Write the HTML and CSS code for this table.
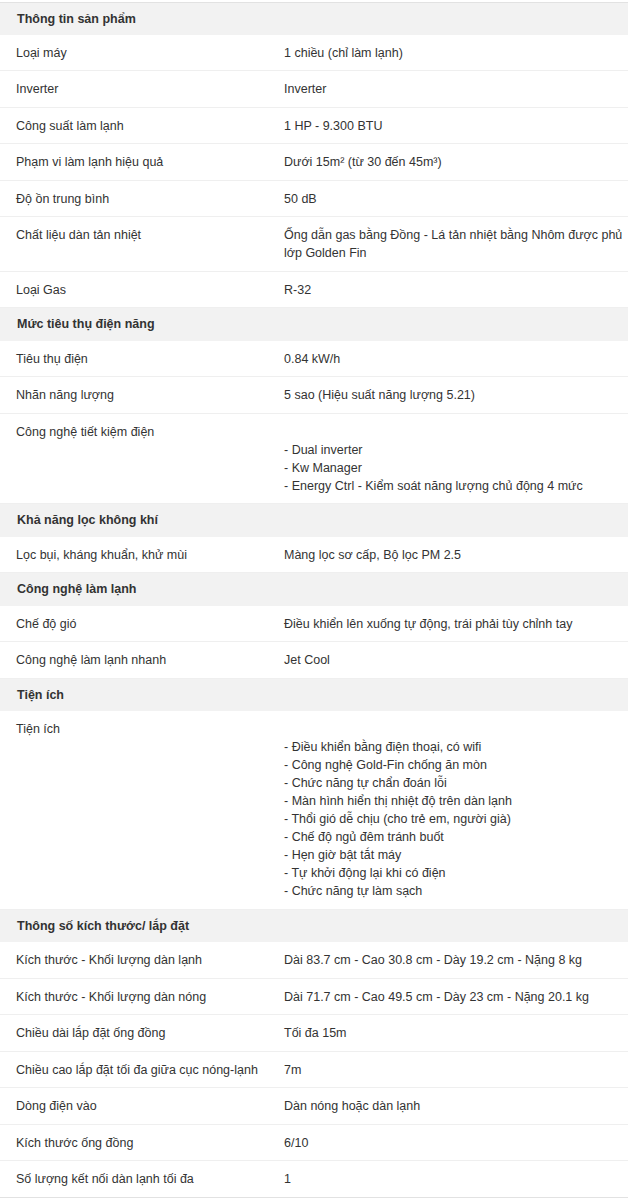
FILE: index.html
```html
<!DOCTYPE html>
<html lang="vi">
<head>
<meta charset="utf-8">
<title>Thông số kỹ thuật</title>
<link rel="stylesheet" href="styles.css">
</head>
<body>
<div class="specs">
  <div class="sec-head first">Thông tin sản phẩm</div>
  <div class="row"><div class="k">Loại máy</div><div class="v">1 chiều (chỉ làm lạnh)</div></div>
  <div class="row"><div class="k">Inverter</div><div class="v">Inverter</div></div>
  <div class="row"><div class="k">Công suất làm lạnh</div><div class="v">1 HP - 9.300 BTU</div></div>
  <div class="row"><div class="k">Phạm vi làm lạnh hiệu quả</div><div class="v">Dưới 15m² (từ 30 đến 45m³)</div></div>
  <div class="row"><div class="k">Độ ồn trung bình</div><div class="v">50 dB</div></div>
  <div class="row"><div class="k">Chất liệu dàn tản nhiệt</div><div class="v">Ống dẫn gas bằng Đồng - Lá tản nhiệt bằng Nhôm được phủ lớp Golden Fin</div></div>
  <div class="row"><div class="k">Loại Gas</div><div class="v">R-32</div></div>

  <div class="sec-head">Mức tiêu thụ điện năng</div>
  <div class="row"><div class="k">Tiêu thụ điện</div><div class="v">0.84 kW/h</div></div>
  <div class="row"><div class="k">Nhãn năng lượng</div><div class="v">5 sao (Hiệu suất năng lượng 5.21)</div></div>
  <div class="row"><div class="k">Công nghệ tiết kiệm điện</div><div class="v"><br>- Dual inverter<br>- Kw Manager<br>- Energy Ctrl - Kiểm soát năng lượng chủ động 4 mức</div></div>

  <div class="sec-head">Khả năng lọc không khí</div>
  <div class="row"><div class="k">Lọc bụi, kháng khuẩn, khử mùi</div><div class="v">Màng lọc sơ cấp, Bộ lọc PM 2.5</div></div>

  <div class="sec-head">Công nghệ làm lạnh</div>
  <div class="row"><div class="k">Chế độ gió</div><div class="v">Điều khiển lên xuống tự động, trái phải tùy chỉnh tay</div></div>
  <div class="row"><div class="k">Công nghệ làm lạnh nhanh</div><div class="v">Jet Cool</div></div>

  <div class="sec-head">Tiện ích</div>
  <div class="row"><div class="k">Tiện ích</div><div class="v"><br>- Điều khiển bằng điện thoại, có wifi<br>- Công nghệ Gold-Fin chống ăn mòn<br>- Chức năng tự chẩn đoán lỗi<br>- Màn hình hiển thị nhiệt độ trên dàn lạnh<br>- Thổi gió dễ chịu (cho trẻ em, người già)<br>- Chế độ ngủ đêm tránh buốt<br>- Hẹn giờ bật tắt máy<br>- Tự khởi động lại khi có điện<br>- Chức năng tự làm sạch</div></div>

  <div class="sec-head">Thông số kích thước/ lắp đặt</div>
  <div class="row"><div class="k">Kích thước - Khối lượng dàn lạnh</div><div class="v">Dài 83.7 cm - Cao 30.8 cm - Dày 19.2 cm - Nặng 8 kg</div></div>
  <div class="row"><div class="k">Kích thước - Khối lượng dàn nóng</div><div class="v">Dài 71.7 cm - Cao 49.5 cm - Dày 23 cm - Nặng 20.1 kg</div></div>
  <div class="row"><div class="k">Chiều dài lắp đặt ống đồng</div><div class="v">Tối đa 15m</div></div>
  <div class="row"><div class="k">Chiều cao lắp đặt tối đa giữa cục nóng-lạnh</div><div class="v">7m</div></div>
  <div class="row"><div class="k">Dòng điện vào</div><div class="v">Dàn nóng hoặc dàn lạnh</div></div>
  <div class="row"><div class="k">Kích thước ống đồng</div><div class="v">6/10</div></div>
  <div class="row"><div class="k">Số lượng kết nối dàn lạnh tối đa</div><div class="v">1</div></div>
</div>
</body>
</html>
```

FILE: styles.css
```css
html, body {
  margin: 0;
  padding: 0;
  background: #fff;
}

body {
  font-family: "Liberation Sans", Arial, sans-serif;
  font-size: 12.5px;
  line-height: 18px;
  color: #333;
}

.specs {
  width: 628px;
  margin-top: 2px;
  border-top: 1px solid #e2e2e2;
  border-bottom: 1px solid #e2e2e2;
}

.sec-head {
  background: #f2f2f2;
  font-weight: bold;
  padding: 7px 16px 7.5px 17px;
}

.sec-head.first {
  padding-bottom: 6.5px;
}

.row {
  display: grid;
  grid-template-columns: 284px 1fr;
  border-bottom: 1px solid #efefef;
}

.row:last-child {
  border-bottom: none;
}

.k {
  padding: 9px 8px 8.5px 16px;
}

.v {
  padding: 9px 4px 8.5px 0;
}
```
